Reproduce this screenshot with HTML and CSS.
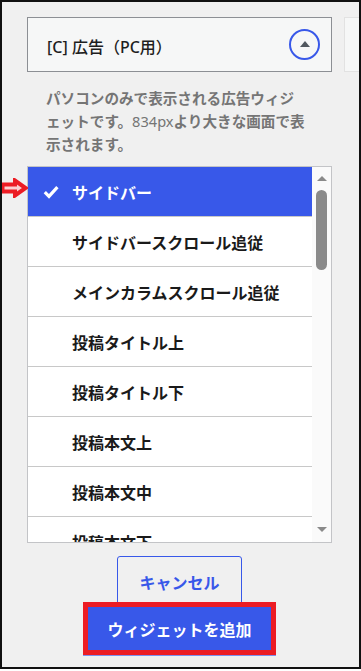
FILE: index.html
```html
<!DOCTYPE html>
<html lang="ja">
<head>
    <meta charset="UTF-8">
    <meta name="viewport" content="width=device-width, initial-scale=1.0">
    <title>ウィジェットを追加</title>
    <link rel="stylesheet" href="styles.css">
</head>
<body>
    <div class="frame">
        <div class="row">
            <div class="panel">
                <div class="widget-head">
                    <span class="widget-title">[C] 広告（PC用）</span>
                    <button class="toggle"><span class="toggle-arrow"></span></button>
                </div>
                <p class="widget-desc">パソコンのみで表示される広告ウィジェットです。<span class="num">834px</span>より大きな画面で表示されます。</p>
                <div class="area-list">
                    <svg class="pointer" width="28" height="20" viewBox="0 0 28 20">
                        <polygon points="2.5,6.5 15,6.5 15,2.5 25.5,10 15,17.5 15,13.5 2.5,13.5" fill="#fbd0d2" stroke="#ec1c24" stroke-width="4" stroke-linejoin="miter"/>
                    </svg>
                    <ul class="areas">
                        <li class="area selected">
                            <span class="check">
                                <svg width="16" height="14" viewBox="0 0 16 14"><path d="M1.8 7.2 L6 11.4 L14.4 2.2" fill="none" stroke="#fff" stroke-width="3.2"/></svg>
                            </span>サイドバー
                        </li>
                        <li class="area"><span class="check"></span>サイドバースクロール追従</li>
                        <li class="area"><span class="check"></span>メインカラムスクロール追従</li>
                        <li class="area"><span class="check"></span>投稿タイトル上</li>
                        <li class="area"><span class="check"></span>投稿タイトル下</li>
                        <li class="area"><span class="check"></span>投稿本文上</li>
                        <li class="area"><span class="check"></span>投稿本文中</li>
                        <li class="area"><span class="check"></span>投稿本文下</li>
                        <li class="area"><span class="check"></span>投稿下</li>
                    </ul>
                    <div class="scrollbar">
                        <span class="sb-up"></span>
                        <span class="sb-thumb"></span>
                        <span class="sb-space"></span>
                        <span class="sb-down"></span>
                    </div>
                </div>
                <div class="actions">
                    <button class="btn-cancel">キャンセル</button>
                    <button class="btn-add">ウィジェットを追加</button>
                </div>
            </div>
            <div class="panel-next"></div>
        </div>
    </div>
</body>
</html>
```

FILE: styles.css
```css
html, body {
    margin: 0;
    padding: 0;
    background: #fff;
}
body {
    font-family: "Noto Sans", "Noto Sans CJK JP", sans-serif;
}
.frame {
    box-sizing: border-box;
    width: 361px;
    height: 669px;
    border: 2px solid #111;
    background: #f0f0f0;
    overflow: hidden;
    padding: 15px 0 0 25px;
}
.row {
    display: flex;
    align-items: flex-start;
    gap: 12px;
}
.panel {
    width: 305px;
    flex-shrink: 0;
}
.panel-next {
    width: 60px;
    height: 55px;
    flex-shrink: 0;
    box-sizing: border-box;
    border: 1px solid #e2e2e2;
    background: #f6f7f7;
}

/* widget header */
.widget-head {
    display: flex;
    align-items: center;
    justify-content: space-between;
    box-sizing: border-box;
    height: 55px;
    border: 1px solid #8c8f94;
    background: #f6f7f7;
    padding: 0 11px 0 19px;
}
.widget-title {
    font-size: 16px;
    font-weight: 500;
    color: #1e1e1e;
    padding-top: 3px;
}
.toggle {
    width: 31px;
    height: 31px;
    box-sizing: border-box;
    border: 2px solid #3858e9;
    border-radius: 50%;
    background: transparent;
    padding: 0;
    display: flex;
    align-items: center;
    justify-content: center;
}
.toggle-arrow {
    width: 0;
    height: 0;
    border-left: 5px solid transparent;
    border-right: 5px solid transparent;
    border-bottom: 6px solid #50575e;
    margin-top: -2px;
}
.widget-desc {
    margin: 15px 0 0;
    padding: 0 25px 0 19px;
    font-size: 14.6px;
    line-height: 23px;
    font-weight: 600;
    color: #757575;
}
.widget-desc .num {
    font-weight: 400;
}

/* area list */
.area-list {
    position: relative;
    display: flex;
    box-sizing: border-box;
    height: 377px;
    margin-top: 10px;
    border: 1px solid #c3c4c7;
    background: #fff;
}
.pointer {
    position: absolute;
    left: -28px;
    top: 11px;
}
.areas {
    list-style: none;
    margin: 0;
    padding: 0;
    flex: 1;
    overflow: hidden;
}
.area {
    display: flex;
    align-items: center;
    height: 49px;
    border-bottom: 1px solid #c8c8c8;
    padding-left: 15px;
    font-size: 16px;
    font-weight: 700;
    color: #1a1a1a;
}
.area.selected {
    background: #3858e9;
    color: #fff;
}
.check {
    display: flex;
    width: 29px;
}
.scrollbar {
    width: 19px;
    box-sizing: border-box;
    background: #fafafa;
    display: flex;
    flex-direction: column;
    align-items: center;
    padding: 9px 0 10px;
}
.sb-up, .sb-down {
    width: 0;
    height: 0;
    border-left: 5px solid transparent;
    border-right: 5px solid transparent;
}
.sb-up { border-bottom: 5px solid #8a8a8a; }
.sb-down { border-top: 5px solid #8a8a8a; }
.sb-thumb {
    width: 11px;
    height: 80px;
    margin-top: 9px;
    border-radius: 6px;
    background: #8a8a8a;
}
.sb-space { flex: 1; }

/* buttons */
.actions {
    display: flex;
    flex-direction: column;
    align-items: center;
    margin-top: 13px;
}
.btn-cancel, .btn-add {
    font-family: "Noto Sans", "Noto Sans CJK JP", sans-serif;
    font-size: 16px;
    font-weight: 700;
    cursor: pointer;
}
.btn-cancel {
    height: 52px;
    padding: 0 21px;
    border: 1px solid #3858e9;
    border-radius: 3px;
    background: transparent;
    color: #3858e9;
}
.btn-add {
    height: 53px;
    margin-top: -6px;
    box-sizing: border-box;
    padding: 0 19px;
    border: 5px solid #ec1c24;
    background: #3858e9;
    color: #fff;
    box-shadow: 0 1px 0 #7d92ef;
}
```
